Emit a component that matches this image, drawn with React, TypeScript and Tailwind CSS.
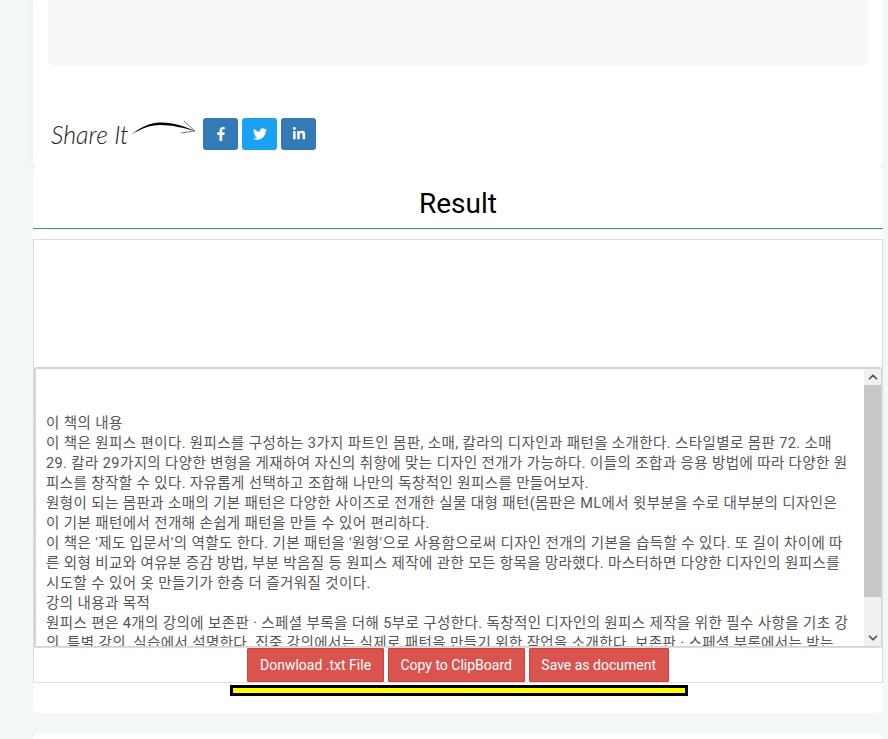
import { FaFacebookF, FaLinkedinIn, FaTwitter } from 'react-icons/fa';
import { ChevronDown, ChevronUp } from 'lucide-react';

const bookLines = [
  '이 책의 내용',
  '이 책은 원피스 편이다. 원피스를 구성하는 3가지 파트인 몸판, 소매, 칼라의 디자인과 패턴을 소개한다. 스타일별로 몸판 72. 소매',
  '29. 칼라 29가지의 다양한 변형을 게재하여 자신의 취향에 맞는 디자인 전개가 가능하다. 이들의 조합과 응용 방법에 따라 다양한 원',
  '피스를 창작할 수 있다. 자유롭게 선택하고 조합해 나만의 독창적인 원피스를 만들어보자.',
  '원형이 되는 몸판과 소매의 기본 패턴은 다양한 사이즈로 전개한 실물 대형 패턴(몸판은 ML에서 윗부분을 수로 대부분의 디자인은',
  '이 기본 패턴에서 전개해 손쉽게 패턴을 만들 수 있어 편리하다.',
  "이 책은 '제도 입문서'의 역할도 한다. 기본 패턴을 '원형'으로 사용함으로써 디자인 전개의 기본을 습득할 수 있다. 또 길이 차이에 따",
  '른 외형 비교와 여유분 증감 방법, 부분 박음질 등 원피스 제작에 관한 모든 항목을 망라했다. 마스터하면 다양한 디자인의 원피스를',
  '시도할 수 있어 옷 만들기가 한층 더 즐거워질 것이다.',
  '강의 내용과 목적',
  '원피스 편은 4개의 강의에 보존판 · 스페셜 부록을 더해 5부로 구성한다. 독창적인 디자인의 원피스 제작을 위한 필수 사항을 기초 강',
  '의, 특별 강의, 실습에서 설명한다. 집중 강의에서는 실제로 패턴을 만들기 위한 작업을 소개한다. 보존판 · 스페셜 부록에서는 박는',
];

const actions = ['Donwload .txt File', 'Copy to ClipBoard', 'Save as document'];

function ShareArrow() {
  return (
    <svg width="66" height="20" viewBox="0 0 66 20" className="shrink-0">
      <path d="M1 17 C10 9 20 5 30 4.5 C42 4 54 8 65 13 C54 10 42 7 30 7 C20 7 10 11 1 17 Z" fill="#000" />
      <path d="M54 3 L65 13 L51 15" fill="none" stroke="#555" strokeWidth="0.8" />
    </svg>
  );
}

export default function App() {
  return (
    <div className="h-[739px] overflow-hidden bg-[#f4f7f8] pl-[33px] pr-[5px] font-['Roboto','Noto_Sans_CJK_KR',sans-serif] text-[14px] text-[#555]">
      {/* share card */}
      <div className="h-[167px] rounded-b-[6px] bg-white px-[15px] shadow-[-2px_0_4px_rgba(0,0,0,0.03)]">
        <div className="h-[66px] rounded-b-[6px] bg-[#f7f7f7]" />
        <div className="mt-[52px] flex h-[32px] items-start">
          <span className="ml-[3px] w-[79px] whitespace-nowrap font-['Lato',sans-serif] text-[25px] leading-[32px] font-light text-[#222] italic">
            Share It
          </span>
          <ShareArrow />
          <div className="ml-[7px] flex gap-[4px]">
            <a className="flex h-[32px] w-[35px] items-center justify-center rounded-[3px] bg-[#337ab7] text-[14px] text-white">
              <FaFacebookF />
            </a>
            <a className="flex h-[32px] w-[35px] items-center justify-center rounded-[3px] bg-[#1da1f2] text-[14px] text-white">
              <FaTwitter />
            </a>
            <a className="flex h-[32px] w-[35px] items-center justify-center rounded-[3px] bg-[#337ab7] text-[14px] text-white">
              <FaLinkedinIn />
            </a>
          </div>
        </div>
      </div>

      {/* result card */}
      <div className="h-[546px] rounded-[6px] bg-white">
        <h2 className="h-[62px] border-b border-[#2fa36f] pt-[19px] text-center text-[28px] leading-[36px] font-normal text-black">
          Result
        </h2>
        <div className="mt-[10px] border border-[#ddd]">
          <div className="h-[127px]" />
          <div className="flex h-[280px] rounded-[2px] border border-t-2 border-l-2 border-[#d4d4d4]">
            <div className="h-full min-w-0 flex-1 overflow-hidden pt-[45px] pl-[10px] text-[14.5px] leading-[20px] tracking-[0.4px]">
              {bookLines.map((line) => (
                <div key={line} className="whitespace-nowrap">
                  {line}
                </div>
              ))}
            </div>
            <div className="flex w-[17px] shrink-0 flex-col bg-[#f1f1f1] text-[#505050]">
              <div className="flex h-[16px] items-center justify-center">
                <ChevronUp size={14} strokeWidth={3} />
              </div>
              <div className="h-[212px] bg-[#c8c8c8]" />
              <div className="flex-1" />
              <div className="flex h-[17px] items-center justify-center">
                <ChevronDown size={14} strokeWidth={3} />
              </div>
            </div>
          </div>
          <div className="flex h-[35px] justify-center gap-[4px] border-t border-[#ddd]">
            {actions.map((label) => (
              <button
                key={label}
                className="h-[34px] rounded-[1px] border border-[#d43f3a] bg-[#d9534f] px-[11.7px] text-[14px] text-white"
              >
                {label}
              </button>
            ))}
          </div>
        </div>
        <div className="mt-[2px] ml-[197px] h-[11px] w-[458px] border-[3px] border-black bg-[#ffff00]" />
      </div>

      <div className="mt-[20px] h-[40px] rounded-[6px] bg-white" />
    </div>
  );
}
